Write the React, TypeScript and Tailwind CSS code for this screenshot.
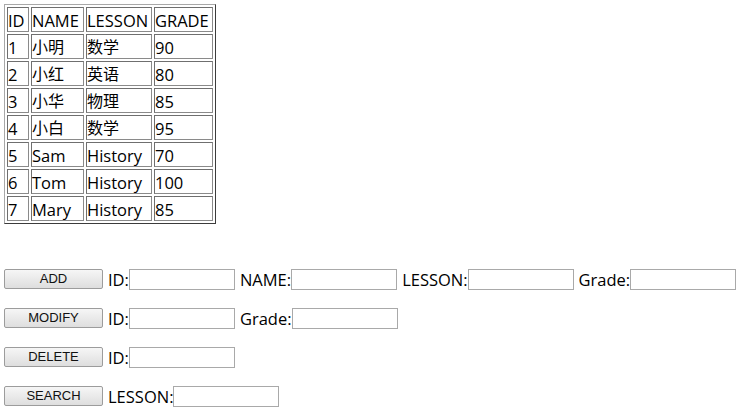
import React from "react";

const rows: [string, string, string, string][] = [
  ["1", "小明", "数学", "90"],
  ["2", "小红", "英语", "80"],
  ["3", "小华", "物理", "85"],
  ["4", "小白", "数学", "95"],
  ["5", "Sam", "History", "70"],
  ["6", "Tom", "History", "100"],
  ["7", "Mary", "History", "85"],
];

const cell =
  "border border-t-[#6f6f6f] border-l-[#6f6f6f] border-r-[#8a8a8a] border-b-[#8a8a8a] px-0 pt-[2px] pb-0 h-[25px] leading-[21px] align-middle text-left font-normal whitespace-nowrap";

const isCJK = (s: string) => /[\u4e00-\u9fff]/.test(s);

function Btn({ label }: { label: string }) {
  return (
    <button className="w-[99px] h-[20px] border border-[#9c9c9c] rounded-[2px] bg-gradient-to-b from-[#f6f6f6] to-[#dedede] text-[13px] leading-[18px] text-[#111] font-['Liberation_Sans',Arial,sans-serif] p-0">
      {label}
    </button>
  );
}

function Field({ label }: { label: string }) {
  return (
    <div className="flex items-center">
      <span className="leading-[21px]">{label}</span>
      <input
        type="text"
        className="w-[106px] h-[21px] border border-[#a9a9a9] bg-white outline-none px-1 text-[14px]"
      />
    </div>
  );
}

export default function App() {
  return (
    <div className="bg-white min-h-[415px] w-[743px] pt-[4px] pl-[4px] text-[16.5px] text-black font-['Open_Sans','Noto_Sans_CJK_SC',sans-serif]">
      <table className="table-fixed w-[210px] border-separate border-spacing-[2px] border border-t-[#a8a8a8] border-l-[#a8a8a8] border-r-[#3c3c3c] border-b-[#3c3c3c]">
        <thead>
          <tr>
            <th className={`${cell} w-[22px]`}>ID</th>
            <th className={`${cell} w-[53px]`}>NAME</th>
            <th className={`${cell} w-[66px]`}>LESSON</th>
            <th className={`${cell} w-[59px]`}>GRADE</th>
          </tr>
        </thead>
        <tbody>
          {rows.map((r) => (
            <tr key={r[0]}>
              {r.map((v, i) => (
                <td key={i} className={`${cell} ${isCJK(v) ? "text-[16px]" : ""}`}>
                  {v}
                </td>
              ))}
            </tr>
          ))}
        </tbody>
      </table>

      <div className="mt-[44px] flex flex-col gap-[17px]">
        <div className="flex items-center gap-[5px] h-[22px]">
          <Btn label="ADD" />
          <Field label="ID:" />
          <Field label="NAME:" />
          <Field label="LESSON:" />
          <Field label="Grade:" />
        </div>
        <div className="flex items-center gap-[5px] h-[22px]">
          <Btn label="MODIFY" />
          <Field label="ID:" />
          <Field label="Grade:" />
        </div>
        <div className="flex items-center gap-[5px] h-[22px]">
          <Btn label="DELETE" />
          <Field label="ID:" />
        </div>
        <div className="flex items-center gap-[5px] h-[22px]">
          <Btn label="SEARCH" />
          <Field label="LESSON:" />
        </div>
      </div>
    </div>
  );
}
